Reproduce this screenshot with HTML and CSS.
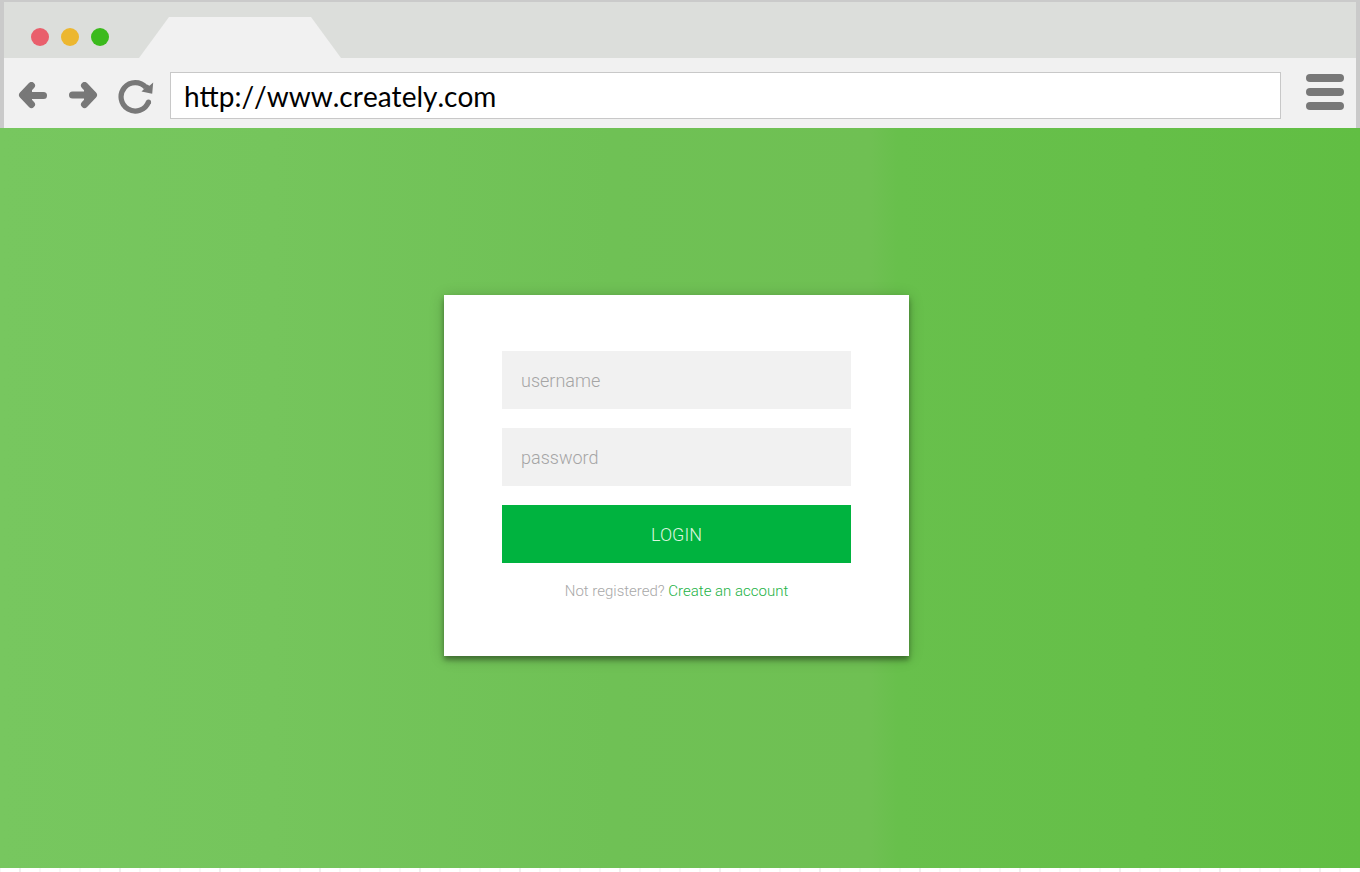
FILE: index.html
```html
<!DOCTYPE html>
<html lang="en">
<head>
  <meta charset="utf-8">
  <meta name="viewport" content="width=device-width, initial-scale=1">
  <title>Login</title>
  <link rel="stylesheet" href="styles.css">
</head>
<body>
  <header class="browser">
    <div class="titlebar">
      <div class="lights">
        <span class="light light-close"></span>
        <span class="light light-minimize"></span>
        <span class="light light-zoom"></span>
      </div>
      <div class="tab"></div>
    </div>
    <div class="toolbar">
      <nav class="nav">
        <button class="icon-button" type="button" aria-label="Back">
          <svg width="30" height="28" viewBox="0 0 30 28" fill="none" stroke="currentColor" stroke-width="7" stroke-linecap="round" stroke-linejoin="round"><path d="M25.500 13.500H6"/><path d="M13.500 3.500L4.500 13l9 9.500"/><path fill="currentColor" stroke="none" d="M5 13l9-8v16z"/></svg>
        </button>
        <button class="icon-button" type="button" aria-label="Forward">
          <svg width="30" height="28" viewBox="0 0 30 28" fill="none" stroke="currentColor" stroke-width="7" stroke-linecap="round" stroke-linejoin="round"><path d="M4.500 13H24"/><path d="M16.500 3.500L25.500 13l-9 9.500"/><path fill="currentColor" stroke="none" d="M25 13l-9-8v16z"/></svg>
        </button>
        <button class="icon-button" type="button" aria-label="Reload">
          <svg width="36" height="36" viewBox="0 0 36 36" fill="none" stroke="currentColor"><path stroke-width="5.200" d="M28 9.500A14.200 14.200 0 1 0 30.500 24"/><circle cx="30.500" cy="24" r="2.600" fill="currentColor" stroke="none"/><path fill="currentColor" stroke="none" d="M35.200 4.500L34.200 15.800L23.500 13.500L27 10L29 6.500L31.500 7.800Z"/></svg>
        </button>
      </nav>
      <input class="address" type="text" aria-label="Address" value="http://www.creately.com">
      <button class="icon-button" type="button" aria-label="Menu">
        <svg width="38" height="36" viewBox="0 0 38 36" fill="currentColor"><rect width="38" height="8" rx="4"/><rect y="14" width="38" height="8" rx="4"/><rect y="28" width="38" height="8" rx="4"/></svg>
      </button>
    </div>
  </header>
  <main class="page">
    <form class="card">
      <input class="field" type="text" placeholder="username" aria-label="username">
      <input class="field" type="password" placeholder="password" aria-label="password">
      <button class="submit" type="button">LOGIN</button>
      <p class="hint">Not registered? <a class="hint-link" href="#">Create an account</a></p>
    </form>
  </main>
  <div class="ruler"></div>
</body>
</html>
```
FILE: styles.css
```css
* {
  box-sizing: border-box;
}

body {
  margin: 0;
  min-height: 100vh;
  display: flex;
  flex-direction: column;
  background: #fff;
  font-family: Roboto, "Liberation Sans", sans-serif;
}

.browser {
  padding: 2px 4px 0;
  background: #cacaca;
}

.titlebar {
  display: flex;
  align-items: flex-end;
  gap: 30px;
  height: 56px;
  padding-left: 27px;
  background: #dcdedb;
}

.lights {
  display: flex;
  gap: 12px;
  padding-bottom: 12px;
}

.light {
  width: 18px;
  height: 18px;
  border-radius: 50%;
}

.light-close {
  background: #e95f6c;
}

.light-minimize {
  background: #ecb730;
}

.light-zoom {
  background: #3bba1c;
}

.tab {
  width: 202px;
  height: 41px;
  background: #f1f1f1;
  clip-path: polygon(30px 0, 172px 0, 100% 100%, 0 100%);
}

.toolbar {
  display: flex;
  gap: 16px;
  padding: 14px 12px 9px 14px;
  background: #f1f1f1;
}

.nav {
  display: flex;
  align-items: center;
  gap: 20px;
}

.icon-button {
  display: flex;
  align-items: center;
  padding: 0;
  border: 0;
  background: none;
  color: #787878;
  cursor: pointer;
}

.toolbar > .icon-button {
  align-self: flex-start;
  margin-left: 9px;
  padding-top: 2px;
}

.address {
  flex: 1;
  min-width: 0;
  height: 47px;
  padding: 0 13px;
  border: 1px solid #c8c8c8;
  background: #fff;
  color: #000;
  font: 28px Lato, sans-serif;
  font-kerning: none;
}

.page {
  flex: 1;
  display: flex;
  justify-content: center;
  align-items: flex-start;
  padding: 167px 7px 40px 0;
  background: linear-gradient(90deg, #77c75f 0%, #75c55c 20%, #6fc155 45%, #6fc053 64%, #68c04c 66%, #65bf48 84%, #61be43 100%);
}

.card {
  display: flex;
  flex-direction: column;
  gap: 19px;
  width: 465px;
  padding: 56px 58px;
  background: #fff;
  box-shadow: 0 2px 14px rgba(0, 0, 0, 0.2), 0 4px 5px rgba(0, 0, 0, 0.35);
}

.field {
  width: 100%;
  height: 58px;
  padding: 0 19px;
  border: 0;
  background: #f1f1f1;
  color: #777;
  font: 300 18px Roboto, sans-serif;
}

.field::placeholder {
  color: #a5a5a5;
  opacity: 1;
}

.submit {
  height: 58px;
  border: 0;
  background: #00b33f;
  color: #dcf5df;
  font: 300 18px Roboto, sans-serif;
  cursor: pointer;
}

.hint {
  margin: 0;
  color: #a8a8a8;
  font-size: 15px;
  font-weight: 300;
  line-height: 18px;
  text-align: center;
}

.hint-link {
  color: #22b245;
  text-decoration: none;
}

.ruler {
  height: 4px;
  background:
    repeating-linear-gradient(90deg, transparent 0 19px, #efefef 19px 21px, transparent 21px 100px),
    repeating-linear-gradient(90deg, #f7f7f7 0 1px, transparent 1px 19px, #f7f7f7 19px 20px);
}
```
